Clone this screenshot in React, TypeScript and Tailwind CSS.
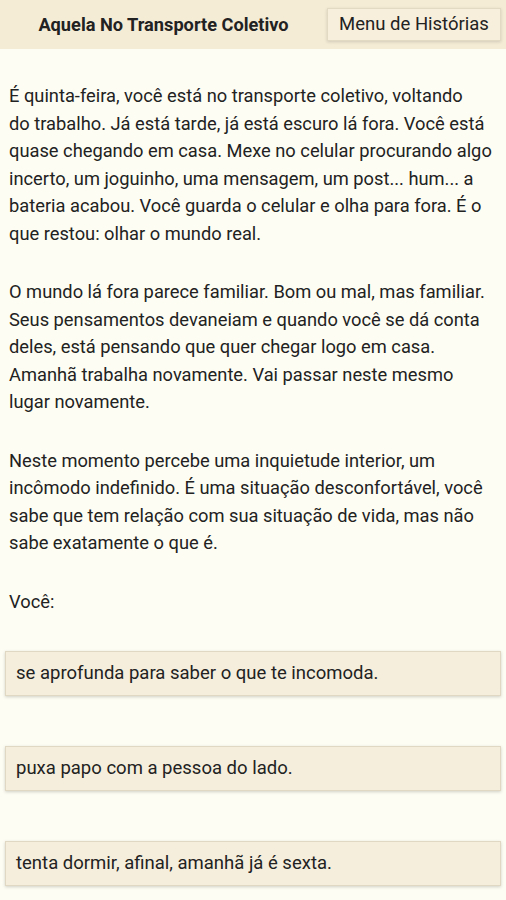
// story text, broken into lines the way the reader shows them
const paragraphs = [
  [
    "É quinta-feira, você está no transporte coletivo, voltando",
    "do trabalho. Já está tarde, já está escuro lá fora. Você está",
    "quase chegando em casa. Mexe no celular procurando algo",
    "incerto, um joguinho, uma mensagem, um post... hum... a",
    "bateria acabou. Você guarda o celular e olha para fora. É o",
    "que restou: olhar o mundo real.",
  ],
  [
    "O mundo lá fora parece familiar. Bom ou mal, mas familiar.",
    "Seus pensamentos devaneiam e quando você se dá conta",
    "deles, está pensando que quer chegar logo em casa.",
    "Amanhã trabalha novamente. Vai passar neste mesmo",
    "lugar novamente.",
  ],
  [
    "Neste momento percebe uma inquietude interior, um",
    "incômodo indefinido. É uma situação desconfortável, você",
    "sabe que tem relação com sua situação de vida, mas não",
    "sabe exatamente o que é.",
  ],
  ["Você:"],
];

const choices = [
  "se aprofunda para saber o que te incomoda.",
  "puxa papo com a pessoa do lado.",
  "tenta dormir, afinal, amanhã já é sexta.",
];

export default function App() {
  return (
    <div className="min-h-[900px] bg-[#fdfdf3] text-[#222] font-['Roboto',sans-serif] overflow-hidden">
      {/* Header */}
      <header className="h-[49px] bg-[#f5ecd6] flex items-center">
        <h1 className="flex-1 text-center text-[18.2px] font-bold">
          Aquela No Transporte Coletivo
        </h1>
        <button className="mr-[5px] h-[33px] w-[174px] border border-[#e3dac3] bg-[#f7efdc] shadow-[0_1px_3px_rgba(0,0,0,0.15)] text-[18.5px]">
          Menu de Histórias
        </button>
      </header>

      {/* Story */}
      <main className="pt-[33px] px-[9px]">
        {paragraphs.map((lines, i) => (
          <p key={i} className="text-[18.3px] leading-[27.5px] whitespace-nowrap mb-[31px] last:mb-0">
            {lines.map((l, j) => (
              <span key={j} className="block">
                {l}
              </span>
            ))}
          </p>
        ))}
      </main>

      {/* Choices */}
      <div className="px-[5px] pt-[36px] flex flex-col gap-[50px]">
        {choices.map((c) => (
          <button
            key={c}
            className="h-[45px] w-full text-left px-[10px] text-[18.5px] bg-[#f5eedc] border border-[#e0d8c3] shadow-[0_1px_3px_rgba(0,0,0,0.18)]"
          >
            {c}
          </button>
        ))}
      </div>
    </div>
  );
}
